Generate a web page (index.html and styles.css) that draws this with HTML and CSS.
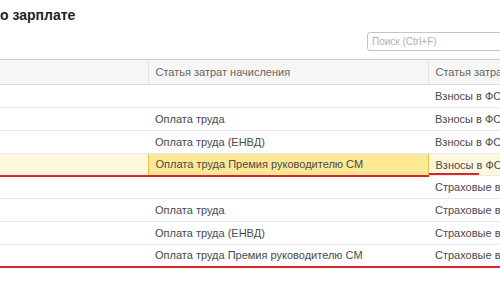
FILE: index.html
```html
<!DOCTYPE html>
<html lang="ru">
<head>
  <meta charset="UTF-8" />
  <title>Настройки учета по зарплате</title>
  <link rel="stylesheet" href="styles.css">
</head>
<body>
  <div class="page">
    <h1 class="title">о зарплате</h1>
    <div class="toolbar">
      <input class="search" type="text" placeholder="Поиск (Ctrl+F)">
    </div>
    <table class="grid">
      <colgroup>
        <col class="c1">
        <col class="c2">
        <col class="c3">
      </colgroup>
      <thead>
        <tr>
          <th></th>
          <th>Статья затрат начисления</th>
          <th>Статья затрат взносов</th>
        </tr>
      </thead>
      <tbody>
        <tr>
          <td></td>
          <td></td>
          <td>Взносы в ФСС</td>
        </tr>
        <tr>
          <td></td>
          <td>Оплата труда</td>
          <td>Взносы в ФСС</td>
        </tr>
        <tr>
          <td></td>
          <td>Оплата труда (ЕНВД)</td>
          <td>Взносы в ФСС</td>
        </tr>
        <tr class="current group-end short">
          <td></td>
          <td class="active">Оплата труда Премия руководителю СМ</td>
          <td>Взносы в ФСС</td>
        </tr>
        <tr>
          <td></td>
          <td></td>
          <td>Страховые взносы</td>
        </tr>
        <tr>
          <td></td>
          <td>Оплата труда</td>
          <td>Страховые взносы</td>
        </tr>
        <tr>
          <td></td>
          <td>Оплата труда (ЕНВД)</td>
          <td>Страховые взносы</td>
        </tr>
        <tr class="group-end">
          <td></td>
          <td>Оплата труда Премия руководителю СМ</td>
          <td>Страховые взносы</td>
        </tr>
      </tbody>
    </table>
  </div>
</body>
</html>
```

FILE: styles.css
```css
* {
  margin: 0;
  padding: 0;
  box-sizing: border-box;
}
html, body {
  overflow: hidden;
}
body {
  font-family: "Liberation Sans", Arial, sans-serif;
  background-color: #fff;
  color: #4a4a4a;
  width: 500px;
  height: 300px;
}
.page {
  width: 600px;
}
.title {
  font-size: 14px;
  font-weight: bold;
  color: #222;
  line-height: 18px;
  padding-top: 6px;
  height: 32px;
}
.toolbar {
  display: flex;
  padding-left: 367px;
  height: 27px;
}
.search {
  width: 200px;
  height: 19px;
  border: 1px solid #c4c4c4;
  border-radius: 3px;
  padding: 0 4px;
  font-family: "Liberation Sans", Arial, sans-serif;
  font-size: 10px;
  color: #444;
}
.search::placeholder {
  color: #b0b0b0;
}
.grid {
  border-collapse: collapse;
  table-layout: fixed;
  width: 600px;
  font-size: 11px;
}
.c1 { width: 148px; }
.c2 { width: 280px; }
.c3 { width: 172px; }
th {
  height: 25px;
  font-weight: normal;
  text-align: left;
  color: #666;
  background-color: #f6f6f6;
  border-top: 1px solid #cfcfcf;
  border-bottom: 1px solid #dcdcdc;
  border-left: 1px solid #e2e2e2;
  padding: 0 7px;
}
th:first-child {
  border-left: none;
}
td {
  height: 23px;
  padding: 0 7px;
  border-bottom: 1px solid #e9e9e9;
  white-space: nowrap;
  overflow: hidden;
}
.current td {
  background-color: #fdf7de;
}
.current td.active {
  background-color: #fde895;
  border: 1px solid #e5c050;
  border-bottom: 2px solid #d9262b;
}
.group-end td {
  height: 22px;
  border-bottom: 2px solid #d9262b;
}
.short td:last-child {
  border-bottom: 1px solid #e9e9e9;
  background-image: linear-gradient(#d9262b, #d9262b);
  background-size: 50px 2px;
  background-position: left bottom;
  background-repeat: no-repeat;
}
```
